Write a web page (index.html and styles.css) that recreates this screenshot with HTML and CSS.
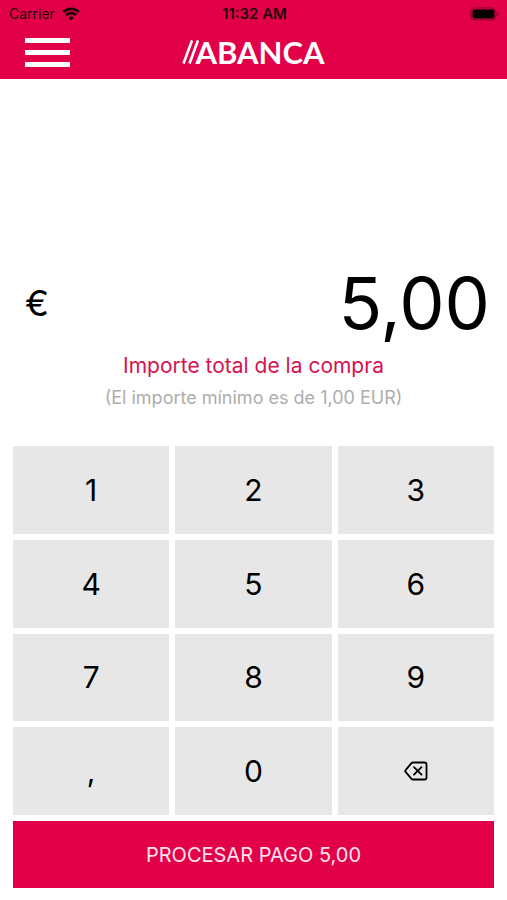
FILE: index.html
```html
<!DOCTYPE html>
<html lang="es">
<head>
<meta charset="utf-8">
<meta name="viewport" content="width=device-width, initial-scale=1">
<title>ABANCA</title>
<link rel="stylesheet" href="styles.css">
</head>
<body>
<header class="header">
  <div class="status">
    <div class="carrier">
      <span>Carrier</span>
      <svg class="wifi" viewBox="0 0 18 14" aria-hidden="true">
        <path d="M1.2 5a11.200 11.200 0 0 1 15.600 0M4 8.200a7.200 7.200 0 0 1 10 0" fill="none" stroke="currentColor" stroke-width="2.800"/>
        <path d="M9 13.600 6.200 10.800a4 4 0 0 1 5.600 0z" fill="currentColor"/>
      </svg>
    </div>
    <time class="clock">11:32 AM</time>
    <svg class="battery" viewBox="0 0 30 14" aria-hidden="true">
      <rect x="1" y="1" width="25" height="12" rx="3.500" fill="none" stroke="currentColor" stroke-opacity=".4"/>
      <rect x="2.500" y="2.500" width="22" height="9" rx="2" fill="currentColor"/>
      <path d="M27.500 5v4c1.800-.5 1.800-3.500 0-4z" fill="currentColor" fill-opacity=".4"/>
    </svg>
  </div>
  <div class="bar">
    <button class="menu" type="button" aria-label="Menú"><span></span><span></span><span></span></button>
    <div class="logo">
      <svg class="slashes" viewBox="0 0 17 24" aria-hidden="true">
        <path d="M1.500 23.500 10 .5M7.500 23.500 16 .5" stroke="currentColor" stroke-width="2.600" fill="none"/>
      </svg>
      <span>ABANCA</span>
    </div>
  </div>
</header>
<main class="main">
  <section class="amount">
    <span class="currency">€</span>
    <output class="value">5,00</output>
  </section>
  <p class="caption">Importe total de la compra</p>
  <p class="hint">(El importe mínimo es de 1,00 EUR)</p>
  <div class="keypad">
    <button type="button">1</button>
    <button type="button">2</button>
    <button type="button">3</button>
    <button type="button">4</button>
    <button type="button">5</button>
    <button type="button">6</button>
    <button type="button">7</button>
    <button type="button">8</button>
    <button type="button">9</button>
    <button type="button">,</button>
    <button type="button">0</button>
    <button type="button" aria-label="Borrar">
      <svg class="erase" viewBox="0 0 24 20" aria-hidden="true">
        <path d="M9 1.500H20.500a2 2 0 0 1 2 2v13a2 2 0 0 1-2 2H9a2 2 0 0 1-1.500-.6L1.800 11.200a1.700 1.700 0 0 1 0-2.400L7.500 2.100a2 2 0 0 1 1.500-.6zM10 6.200l7.500 7.500M17.500 6.200l-7.500 7.500" fill="none" stroke="currentColor" stroke-width="1.800" stroke-linecap="round" stroke-linejoin="round"/>
      </svg>
    </button>
  </div>
  <button class="pay" type="button">PROCESAR PAGO 5,00</button>
</main>
</body>
</html>
```
FILE: styles.css
```css
* {
  box-sizing: border-box;
}

body {
  display: flex;
  flex-direction: column;
  min-height: 100vh;
  margin: 0;
  background: #fff;
  color: #000;
  font-family: Inter, "Liberation Sans", sans-serif;
}

button {
  border: 0;
  padding: 0;
  font: inherit;
  cursor: pointer;
}

.header {
  height: 79px;
  background: #e20049;
}

.status {
  display: grid;
  grid-template-columns: 1fr auto 1fr;
  align-items: center;
  height: 27px;
  padding: 0 7px 0 9px;
  color: #24000b;
  font-size: 14px;
}

.carrier {
  display: flex;
  align-items: center;
  gap: 7px;
}

.wifi {
  width: 18px;
  height: 14px;
}

.clock {
  font-size: 15px;
  font-weight: 600;
}

.battery {
  justify-self: end;
  width: 30px;
  height: 14px;
  color: #000;
}

.bar {
  display: grid;
  grid-template-columns: 1fr auto 1fr;
  align-items: center;
  height: 50px;
  padding: 0 25px;
}

.menu {
  display: flex;
  flex-direction: column;
  gap: 7px;
  width: 45px;
  background: none;
}

.menu span {
  height: 5px;
  background: #fff;
}

.logo {
  display: flex;
  align-items: center;
  color: #fff;
  font: bold 31px/32px Lato, sans-serif;
}

.slashes {
  width: 17px;
  height: 24px;
  margin-right: -4px;
}

.main {
  display: flex;
  flex: 1;
  flex-direction: column;
  padding: 176px 13px 12px;
}

.amount {
  display: flex;
  align-items: center;
  justify-content: space-between;
  padding: 0 4px 0 12px;
  line-height: 96px;
}

.currency {
  font-size: 36px;
}

.value {
  font-size: 72px;
}

.caption {
  margin: 0;
  color: #d6124f;
  font-size: 21px;
  line-height: 30px;
  text-align: center;
}

.hint {
  margin: 0;
  color: #adadad;
  font-size: 18px;
  line-height: 34px;
  text-align: center;
}

.keypad {
  display: grid;
  flex: 1;
  grid-template-columns: repeat(3, 1fr);
  grid-auto-rows: 1fr;
  gap: 6px;
  margin: 31px 0 6px;
}

.keypad button {
  display: flex;
  align-items: center;
  justify-content: center;
  background: #e7e7e7;
  color: #000;
  font-size: 30px;
}

.erase {
  width: 24px;
  height: 20px;
}

.pay {
  height: 67px;
  background: #e20049;
  color: #ffe3ec;
  font-size: 20px;
}
```
